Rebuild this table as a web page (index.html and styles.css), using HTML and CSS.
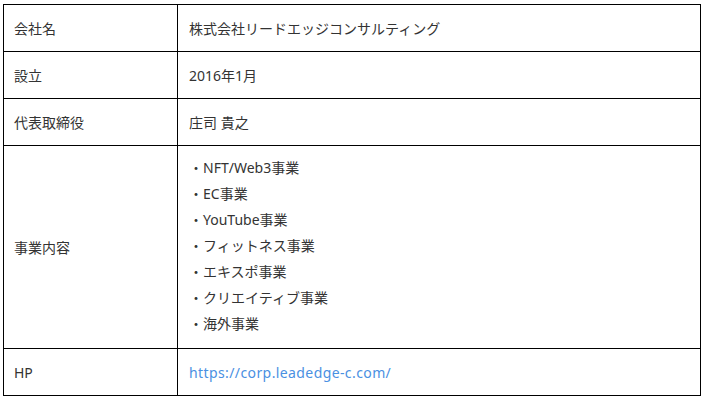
FILE: index.html
```html
<!DOCTYPE html>
<html lang="ja">
<head>
<meta charset="utf-8">
<link rel="stylesheet" href="styles.css">
</head>
<body>
<table class="info">
  <tr><th>会社名</th><td>株式会社リードエッジコンサルティング</td></tr>
  <tr><th>設立</th><td>2016年1月</td></tr>
  <tr><th>代表取締役</th><td>庄司 貴之</td></tr>
  <tr><th>事業内容</th><td class="list-cell">
    <ul class="biz">
      <li>・NFT/Web3事業</li>
      <li>・EC事業</li>
      <li>・YouTube事業</li>
      <li>・フィットネス事業</li>
      <li>・エキスポ事業</li>
      <li>・クリエイティブ事業</li>
      <li>・海外事業</li>
    </ul>
  </td></tr>
  <tr><th>HP</th><td><a class="link" href="#">https://corp.leadedge-c.com/</a></td></tr>
</table>
</body>
</html>
```

FILE: styles.css
```css
html, body {
  margin: 0;
  padding: 0;
  background: #fff;
}
body {
  padding: 4px 0 0 3px;
  font-family: "Noto Sans", "Noto Sans CJK JP", sans-serif;
  font-size: 14px;
  color: #333;
}
.info {
  border-collapse: collapse;
  width: 698px;
}
.info th, .info td {
  border: 1px solid #000;
  padding: 13px 11px 12px;
  line-height: 21px;
  text-align: left;
  font-weight: normal;
  vertical-align: middle;
}
.info th {
  width: 152px;
  padding-left: 10px;
}
.info td.list-cell {
  padding-top: 9px;
  padding-bottom: 11px;
}
.biz {
  list-style: none;
  margin: 0;
  padding: 0;
}
.biz li {
  line-height: 26px;
}
.link {
  color: #4a90e2;
  text-decoration: none;
  letter-spacing: 0.4px;
}
```
